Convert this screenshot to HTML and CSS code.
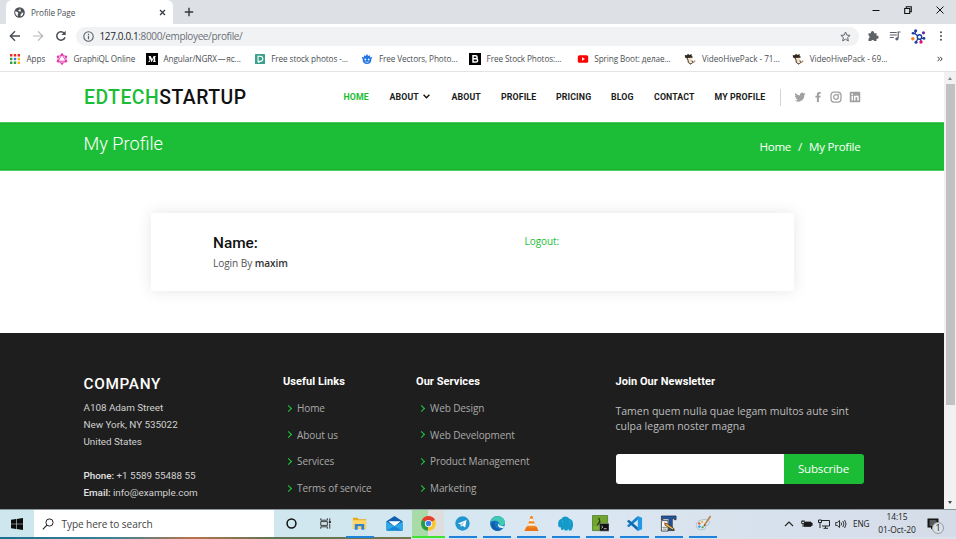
FILE: index.html
```html
<!DOCTYPE html>
<html lang="en">
<head>
<meta charset="utf-8">
<title>Profile Page</title>
<link rel="stylesheet" href="styles.css">
</head>
<body>
<div class="screen">
  <div class="tabstrip">
    <div class="tab">
      <svg class="globe" viewBox="0 0 10 10"><circle cx="5" cy="5" r="4.8" fill="#4b5056"/><path d="M1 4.2l2 .1 1 1.2-.6 1 .2 2.1C1.800 7.800 1 6.300 1 4.200zM5.400 1l-.4 1.400-1.300.6.8.9 1.700.2.5 1.300L8.600 5 8 7.200 6.300 8.700l-.5-1.700L7 5.800" fill="#fff"/></svg>
      <span class="tab-title">Profile Page</span>
      <svg class="tab-x" viewBox="0 0 7 7"><path d="M1 1l5 5M6 1L1 6" stroke="#33373b" stroke-width="1.200"/></svg>
    </div>
    <svg class="plus" viewBox="0 0 10 10"><path d="M5 .8v8.400M.8 5h8.400" stroke="#33373b" stroke-width="1.400"/></svg>
    <div class="win-controls">
      <svg viewBox="0 0 8 8"><path d="M.5 4.500h7" stroke="#111" stroke-width="1"/></svg>
      <svg viewBox="0 0 8 8"><path d="M.7 2.500h5v5h-5zM2.300 2.500V.8h5v5H5.700" fill="none" stroke="#111" stroke-width="1.100"/></svg>
      <svg viewBox="0 0 8 8"><path d="M.5.500l7 7M7.500.500l-7 7" stroke="#111" stroke-width="1"/></svg>
    </div>
  </div>
  <div class="toolbar">
    <svg class="nav-i" viewBox="0 0 12 12"><path d="M11 6H1.500M6 1.300L1.300 6 6 10.700" fill="none" stroke="#4a4e53" stroke-width="1.400"/></svg>
    <svg class="nav-i" viewBox="0 0 12 12"><path d="M1 6h9.500M6 1.300L10.700 6 6 10.700" fill="none" stroke="#b4b7ba" stroke-width="1.200"/></svg>
    <svg class="nav-i" viewBox="0 0 12 12"><path d="M10 7.200A4.200 4.200 0 1 1 9.200 3.200" fill="none" stroke="#4a4e53" stroke-width="1.500"/><path d="M10.700.8v4.300H6.400z" fill="#4a4e53"/></svg>
    <div class="omnibox">
      <svg class="info" viewBox="0 0 10 10"><circle cx="5" cy="5" r="4.300" fill="none" stroke="#5f6368"/><path d="M5 4.300v3.200M5 2.400v1.200" stroke="#5f6368" stroke-width="1.100"/></svg>
      <span class="url"><b>127.0.0.1</b>:8000/employee/profile/</span>
      <svg class="star" viewBox="0 0 10 10"><path d="M5 .9l1.200 2.800 3 .3-2.300 2 .7 3L5 7.500 2.400 9l.7-3L.8 4l3-.3z" fill="none" stroke="#5f6368" stroke-width=".9"/></svg>
    </div>
    <div class="ext">
      <svg viewBox="0 0 12 12"><path d="M1.500 3.200H4a1.600 1.600 0 1 1 3 0h2.500v2.500a1.600 1.600 0 1 1 0 3V11H7.200a1.600 1.600 0 0 0-3 0H1.500V8.600a1.600 1.600 0 0 0 0-3z" fill="#5f6368"/></svg>
      <svg viewBox="0 0 12 12"><path d="M.8 2.500h7M.8 5h7M.8 7.500h4M11.600 2H9.200v6.300" fill="none" stroke="#5f6368" stroke-width="1.200"/><circle cx="7.900" cy="8.800" r="1.600" fill="#5f6368"/></svg>
      <svg class="molecule" viewBox="0 0 15 15"><path d="M4.600 1.800L4 4.700 2 4.300M4 4.700l3 2.300M10.500 9.300l2.500.1M7 9.500l-2 3.700M9.500 10l.5 2.800" fill="none" stroke="#1d3f9c" stroke-width="1.300"/><circle cx="8.500" cy="8" r="2.200" fill="none" stroke="#1d3f9c" stroke-width="1.400"/><g fill="#1d3f9c"><circle cx="4.600" cy="1.800" r="1.600"/><circle cx="2" cy="4.300" r="1.300"/><circle cx="5" cy="13.200" r="1.500"/><circle cx="13" cy="9.400" r="1.400"/></g><circle cx="1.800" cy="9.800" r="1.700" fill="#f58220"/><circle cx="12.500" cy="3.800" r="1.600" fill="#662d91"/><circle cx="10" cy="13" r="1.700" fill="#e5127d"/></svg>
      <svg class="dots" viewBox="0 0 4 12"><g fill="#4a4e53"><circle cx="2" cy="2.200" r="1"/><circle cx="2" cy="6" r="1"/><circle cx="2" cy="9.800" r="1"/></g></svg>
    </div>
  </div>
  <div class="bookmarks">
    <div class="bm bm-apps"><svg viewBox="0 0 12 12"><g fill="#ea2b1f"><path d="M1 1h2.400v2.400H1zM4.800 1h2.400v2.400H4.800zM8.600 1H11v2.400H8.600z"/></g><path d="M1 4.800h2.400v2.400H1z" fill="#2f9e44"/><path d="M4.800 4.800h2.400v2.400H4.800z" fill="#2f7de1"/><path d="M8.600 4.800H11v2.400H8.600z" fill="#f6b50b"/><path d="M1 8.600h2.400V11H1zM4.800 8.600h2.400V11H4.800z" fill="#2f9e44"/><path d="M8.600 8.600H11V11H8.600z" fill="#f6b50b"/></svg><span>Apps</span></div>
    <div class="bm bm-gql"><svg viewBox="0 0 12 12"><path d="M6 1.500l4 2.300v4.400l-4 2.300-4-2.300V3.800zM6 1.500L2 8.200h8z" fill="none" stroke="#e535ab" stroke-width=".9"/><g fill="#e535ab"><circle cx="6" cy="1.400" r="1.200"/><circle cx="10" cy="3.700" r="1.200"/><circle cx="10" cy="8.300" r="1.200"/><circle cx="6" cy="10.600" r="1.200"/><circle cx="2" cy="8.300" r="1.200"/><circle cx="2" cy="3.700" r="1.200"/></g></svg><span>GraphiQL Online</span></div>
    <div class="bm bm-med"><svg viewBox="0 0 12 12"><path d="M0 0h12v12H0z" fill="#000"/><path d="M2.500 3h2.200L6.200 6.200 7.600 3h2.200v.6l-.6.500v4l.6.500v.5H7v-.5l.6-.5V4.900L5.800 9h-.4L3.600 5v3l.8 1H2.200l.8-1V4z" fill="#fff"/></svg><span>Angular/NGRX&#8202;—&#8202;яс...</span></div>
    <div class="bm bm-dep"><svg viewBox="0 0 12 12"><rect x="1" y="1" width="10" height="10" rx=".6" fill="#3aa18b"/><path d="M4 3.200h2.200a2.500 2.500 0 0 1 0 5.200H4zM4 9.300h1.500" fill="none" stroke="#fff" stroke-width="1.100"/></svg><span>Free stock photos -...</span></div>
    <div class="bm bm-vec"><svg viewBox="0 0 12 12"><path d="M.6 3.800l2 .6.700-2.200 1.600.8L6 .8l1.100 2.200 1.600-.8.700 2.200 2-.6-1 2.200c0 3.200-1.600 5-4.400 5S1.600 9.200 1.600 6z" fill="#2276e3"/><circle cx="4.300" cy="6.500" r=".9" fill="#fff"/><circle cx="7.700" cy="6.500" r=".9" fill="#fff"/><path d="M4.300 8.800q1.700 1 3.400 0" stroke="#fff" stroke-width=".7" fill="none"/></svg><span>Free Vectors, Photo...</span></div>
    <div class="bm bm-fsp"><svg viewBox="0 0 12 12"><path d="M0 0h12v12H0z" fill="#000"/><path d="M4 2.800h2.600a1.500 1.500 0 0 1 0 3H4zM4 5.800h3a1.600 1.600 0 0 1 0 3.300H4z" fill="none" stroke="#fff" stroke-width="1.500"/></svg><span>Free Stock Photos:...</span></div>
    <div class="bm bm-yt"><svg viewBox="0 0 12 12"><rect x=".8" y="2.200" width="10.400" height="7.600" rx="1.600" fill="#f00"/><path d="M5 4.200v3.600L8 6z" fill="#fff"/></svg><span>Spring Boot: делае...</span></div>
    <div class="bm bm-vh"><svg viewBox="0 0 12 12"><path d="M.8 2l2 .3L4 .8l1.300 1.300L7.500 1l.3 2.300 1.400.7-1.700 1-4.500.300L1 4.500z" fill="#33291f"/><path d="M3 5l4.500-.2.700 3-1.200 2.400L4.500 9z" fill="#f2e2c9"/><path d="M3 5l1 2 .3 2.500L7 11.200l1.500-1.500L8 7.500" fill="none" stroke="#3c3026"/><path d="M9 9.800l2.300-2.200" stroke="#b08a58" stroke-width="1.200"/></svg><span>VideoHivePack - 71...</span></div>
    <div class="bm bm-vh"><svg viewBox="0 0 12 12"><path d="M.8 2l2 .3L4 .8l1.300 1.300L7.500 1l.3 2.300 1.400.7-1.700 1-4.500.300L1 4.500z" fill="#33291f"/><path d="M3 5l4.500-.2.700 3-1.200 2.400L4.500 9z" fill="#f2e2c9"/><path d="M3 5l1 2 .3 2.500L7 11.200l1.500-1.500L8 7.500" fill="none" stroke="#3c3026"/><path d="M9 9.800l2.300-2.200" stroke="#b08a58" stroke-width="1.200"/></svg><span>VideoHivePack - 69...</span></div>
    <svg class="more" viewBox="0 0 6 6"><path d="M.6.800L2.600 3l-2 2.200M3.200.800L5.200 3l-2 2.200" fill="none" stroke="#3c4043" stroke-width="1"/></svg>
  </div>
  <div class="viewport">
    <div class="page">
      <header class="header">
        <div class="logo"><span>EDTECH</span>STARTUP</div>
        <nav class="nav">
          <a class="active w-home">HOME</a><a class="w-drop">ABOUT<svg viewBox="0 0 6 4"><path d="M.5.600L3 3.100 5.500.600" fill="none" stroke="#111" stroke-width="1.200"/></svg></a><a class="w-about">ABOUT</a><a class="w-prof">PROFILE</a><a class="w-price">PRICING</a><a class="w-blog">BLOG</a><a class="w-cont">CONTACT</a><a class="w-my">MY PROFILE</a>
        </nav>
        <div class="social">
          <svg viewBox="0 0 24 24"><path d="M23 5.500a9 9 0 0 1-2.600.7 4.500 4.500 0 0 0 2-2.500 9 9 0 0 1-2.900 1.100 4.500 4.500 0 0 0-7.700 4.100A12.800 12.800 0 0 1 2.500 4.200a4.500 4.500 0 0 0 1.400 6 4.500 4.500 0 0 1-2-.6 4.500 4.500 0 0 0 3.600 4.500 4.500 4.500 0 0 1-2 .1 4.500 4.500 0 0 0 4.200 3.100A9 9 0 0 1 1 19.100 12.800 12.800 0 0 0 20.700 7.800 9 9 0 0 0 23 5.500z"/></svg>
          <svg viewBox="0 0 24 24"><path d="M13.800 22v-9h3l.6-3.700h-3.600V7.100c0-1.200.5-1.800 1.800-1.800h1.900V2h-3c-3 0-4.700 1.800-4.700 4.600v2.700H6.700V13h3.100v9z"/></svg>
          <svg viewBox="0 0 24 24"><rect x="2" y="2" width="20" height="20" rx="6" fill="none" stroke="#a0a0a0" stroke-width="2.500"/><circle cx="12" cy="12" r="4.700" fill="none" stroke="#a0a0a0" stroke-width="2.500"/><circle cx="17.700" cy="6.300" r="1.500"/></svg>
          <svg viewBox="0 0 24 24"><path fill-rule="evenodd" d="M3 1.500h18a1.500 1.500 0 0 1 1.500 1.500v18a1.500 1.500 0 0 1-1.500 1.500H3A1.500 1.500 0 0 1 1.500 21V3A1.500 1.500 0 0 1 3 1.500zM5 9.500V19h3V9.500zM5 5v3h3V5zM10 9.500V19h3v-5c0-3 3.500-3 3.500 0v5h3v-6c0-4.500-5-4.700-6.500-2V9.500z"/></svg>
        </div>
      </header>
      <section class="banner"><h1>My Profile</h1><div class="crumbs"><span>Home</span><span>/</span><span>My Profile</span></div></section>
      <main class="main">
        <div class="card">
          <div class="who"><h2>Name:</h2><p>Login By <b>maxim</b></p></div>
          <a class="logout">Logout:</a>
        </div>
      </main>
      <footer class="footer">
        <div class="company"><h3>COMPANY</h3><p>A108 Adam Street</p><p>New York, NY 535022</p><p>United States</p><p class="phone"><b>Phone:</b> +1 5589 55488 55</p><p class="email"><b>Email:</b> info@example.com</p></div>
        <div class="links"><h4>Useful Links</h4><ul><li>Home</li><li>About us</li><li>Services</li><li>Terms of service</li></ul></div>
        <div class="links"><h4>Our Services</h4><ul><li>Web Design</li><li>Web Development</li><li>Product Management</li><li>Marketing</li></ul></div>
        <div class="news"><h4>Join Our Newsletter</h4><p>Tamen quem nulla quae legam multos aute sint<br>culpa legam noster magna</p><div class="sub"><span class="field"></span><span class="btn">Subscribe</span></div></div>
      </footer>
    </div>
    <div class="scrollbar"><i class="up"></i><div class="thumb"></div><i class="down"></i></div>
  </div>
  <div class="taskbar">
    <div class="start"><svg viewBox="0 0 12 12"><path d="M0 1.700L5 1v4.700H0zM5.600.9L12 0v5.700H5.600zM0 6.300h5V11l-5-.7zM5.600 6.300H12V12l-6.400-.9z" fill="#0b0b0b"/></svg></div>
    <div class="search"><svg viewBox="0 0 12 12"><circle cx="7.500" cy="4.500" r="3.600" fill="none" stroke="#222" stroke-width="1"/><path d="M4.900 7.100L.8 11.300" stroke="#222" stroke-width="1.100"/></svg><span>Type here to search</span></div>
    <div class="apps">
      <div class="app plain"><svg viewBox="0 0 18 18"><circle cx="9" cy="9" r="4.700" fill="none" stroke="#111" stroke-width="1.600"/></svg></div>
      <div class="app plain"><svg viewBox="0 0 18 18"><path d="M4 3.500v2h7v-2M4 14.500v-2h7v2M4 7h7v4H4zM13.500 3.500v3M13.500 9v5.500" fill="none" stroke="#333" stroke-width="1"/><path d="M12.500 6.500h2.200v2h-2.200z" fill="#222"/></svg></div>
      <div class="app"><svg viewBox="0 0 18 18"><path d="M2 3h5l1 1.500h8v10H2z" fill="#e9a91f"/><path d="M2 5.500h14v9H2z" fill="#ffd768"/><path d="M4 9.500h10v6h-3V12H7v3.500H4z" fill="#2d83cf"/></svg></div>
      <div class="app plain"><svg viewBox="0 0 18 18"><path d="M.5 6.500L9 1l8.500 5.500V16.500H.5z" fill="#0f5fae"/><path d="M2.500 6.500h13L9 12z" fill="#fff"/><path d="M.5 7L9 12l8.500-5v9.500H.5z" fill="#2aa8ea"/><path d="M.5 16.500L9 12l8.500 4.500z" fill="#1685d3"/></svg></div>
      <div class="app chrome"><svg viewBox="0 0 18 18"><circle cx="9" cy="9" r="7.800" fill="#fbc52d"/><path d="M9 9L2.200 5.100A7.800 7.800 0 0 1 15.800 5.100z" fill="#e23d2e"/><path d="M2.200 5.100L9 9l-.8 7.800A7.800 7.800 0 0 1 2.200 5.100z" fill="#269b49"/><circle cx="9" cy="9" r="3.800" fill="#fff"/><circle cx="9" cy="9" r="2.900" fill="#3f80e8"/></svg></div>
      <div class="app"><svg viewBox="0 0 18 18"><circle cx="9" cy="9" r="7.600" fill="#2196d0"/><path d="M4 9l9.300-3.700-1.500 8-3-2.200-1.500 1.600-.3-2.800z" fill="#fff"/><path d="M7 9.900l4.500-3-3 4.200" fill="#9ccde8"/></svg></div>
      <div class="app"><svg viewBox="0 0 18 18"><circle cx="9" cy="9" r="7.900" fill="#137ac6"/><path d="M1.500 7C3.500-.5 16-1 17 8c0 3.500-4.500 4.500-6.500 3 1.500-2.500-.5-5-3.500-5-2.500 0-4.500.5-5.500 1z" fill="#42c9b2"/><path d="M7 6.500c-3 3 0 9 6.500 8.700C9 18.500 2 16 2.500 10 3 7.500 5 6.500 7 6.500z" fill="#155ca8"/><path d="M10.300 8.300c-1 2.500 2 4.200 5.900 3.400l-.8 1.800c-4.500 1-7.400-2-5.100-5.200z" fill="#eaf4fa"/></svg></div>
      <div class="app"><svg viewBox="0 0 18 18"><path d="M3.500 12.500h11l2 4.500h-15z" fill="#ec7416"/><path d="M8 1h2l3.500 12q-4.500 2-9 0z" fill="#f0861c"/><path d="M7.100 4h3.800l.8 2.700H6.300zM5.700 9h6.600l.7 2.500H5z" fill="#f5f1ec"/></svg></div>
      <div class="app"><svg viewBox="0 0 18 18"><path d="M1.200 10C1.200 6 3 4.500 5 4c1-3 6-3.500 8 0 3 .5 4 3 4 6s-1 5-2 6.500h-2.500L12 14.500l-1 2H8L7.500 14.500 6 16H4.500L4 13c-1 .5-2.800 0-2.800-3z" fill="#1499c9"/><path d="M6 5q-1 3 1 5M13 5q2 3 0 5" fill="none" stroke="#23b8df" stroke-width=".7"/></svg></div>
      <div class="app"><svg viewBox="0 0 18 18"><path d="M.5.500h16v16H.5z" fill="#6fa52f" stroke="#446b19" stroke-width=".7"/><path d="M1.500 12h7v3.500h-7z" fill="#7ab536"/><path d="M7 3q2 3 1 8M8 7L5.500 11" stroke="#27420d" stroke-width="1.200" fill="none"/><path d="M8 9h10v8H8z" fill="#111" stroke="#999" stroke-width=".6"/><path d="M10 11.500l1.500 1.300-1.500 1.300M12.500 14.500h3" fill="none" stroke="#ddd" stroke-width=".9"/></svg></div>
      <div class="app"><svg viewBox="0 0 18 18"><path d="M12.500 1L17 3v12l-4.500 2z" fill="#2399e5"/><path d="M12.500 1v4L3 13l-2-1.600z" fill="#1681ce"/><path d="M12.500 17v-4L3 5 1 6.600z" fill="#0b6bb3"/></svg></div>
      <div class="app"><svg viewBox="0 0 18 18"><path d="M1.500 1h15.500v4h-1.500l-.5-1h-2v11h2v1.500H8V15h1.500V4h-6L3 5H1.500z" fill="#1f56a8" stroke="#222" stroke-width=".7"/><path d="M1.500 6h7v11h-7z" fill="#fff" stroke="#222" stroke-width=".8"/><path d="M2.500 13h5M3 15h4" stroke="#555" stroke-width=".8"/><path d="M6.500 8.500l8 5.500-1 2-8.500-5.500z" fill="#f3b53b" stroke="#352510" stroke-width=".7"/><path d="M4 8l3 .5-1.500 2z" fill="#b24b28"/></svg></div>
      <div class="app"><svg viewBox="0 0 18 18"><path d="M8 5c5-1 8 1 7 4s-4 1-4 3 1 3-3 3.500C3 16 .8 13 1.500 9.500 2 7 4.500 5.600 8 5z" fill="#dcebf3" stroke="#84a6b9" stroke-width=".6"/><g><circle cx="4.500" cy="9" r="1.300" fill="#e55639"/><circle cx="7.500" cy="7.200" r="1.200" fill="#f4b32a"/><circle cx="4.600" cy="12.300" r="1.300" fill="#2c8edb"/><circle cx="8" cy="13" r="1.200" fill="#54a942"/></g><path d="M16.500 1L9.500 11.500" stroke="#bb8042" stroke-width="1.700"/><path d="M10 9.500l1.300 1L9 13z" fill="#8c4d23"/></svg></div>
    </div>
    <div class="tray">
      <svg class="t-up" viewBox="0 0 10 10"><path d="M1 7l4-4 4 4" fill="none" stroke="#222" stroke-width="1.100"/></svg>
      <svg class="t-bat" viewBox="0 0 12 10"><path d="M4 3h6v1h1.200v2.500H10v1H3V5z" fill="#1b1b1b" stroke="#1b1b1b" stroke-width=".7"/><path d="M.5 2.500h3v2h-3zM2 4.500V8M1.200 1v1.500M3 1v1.500" fill="none" stroke="#1b1b1b" stroke-width=".8"/></svg>
      <svg class="t-net" viewBox="0 0 12 10"><path d="M3.500 1.500h8v5.500H4M7.500 7v2M5.500 9.300h4.500M.5 1h3v2.500h-3zM2 3.500V9" fill="none" stroke="#222" stroke-width="1"/></svg>
      <svg class="t-vol" viewBox="0 0 12 10"><path d="M.7 3.500h1.600L4.500 1.500v7L2.300 6.500H.7zM6 3.500q1.200 1.500 0 3M7.800 2q2.200 3 0 6M9.600 1q3 4 0 8" fill="none" stroke="#222" stroke-width=".9"/></svg>
      <span class="lang">ENG</span>
      <div class="clock"><span>14:15</span><span>01-Oct-20</span></div>
      <div class="note"><svg viewBox="0 0 12 12"><path d="M.5.500h11v9H6l-2 2v-2H.5z" fill="#151515"/><path d="M2.500 3h7M2.500 5h7M2.500 7h4" stroke="#d5dce6" stroke-width=".7"/></svg><span class="badge">1</span></div>
    </div>
  </div>
  <div class="wallpaper"></div>
</div>
</body>
</html>
```
FILE: styles.css
```css
* { box-sizing: border-box; margin: 0; padding: 0; }
body { width: 956px; height: 539px; overflow: hidden; background: #fff; font-family: "Open Sans", "Noto Sans", sans-serif; }
svg { display: block; flex: none; }
.screen { display: flex; flex-direction: column; width: 956px; height: 539px; }

.tabstrip { display: flex; height: 24px; background: #dde1e6; padding-left: 6px; align-items: center; }
.tab { display: flex; align-items: center; width: 167px; height: 24px; padding-left: 8px; background: #fff; border-radius: 6px 6px 0 0; }
.globe { width: 11px; height: 11px; }
.tab-title { width: 128px; margin-left: 6px; font-size: 8.200px; letter-spacing: -.1px; color: #4b4f54; }
.tab-x { width: 7px; height: 7px; }
.plus { width: 10px; height: 10px; margin-left: 11px; }
.win-controls { display: flex; gap: 24px; margin: -4px 12px 0 auto; }
.win-controls svg { width: 8px; height: 8px; }

.toolbar { display: flex; height: 24px; align-items: center; padding-left: 9px; }
.nav-i { width: 12px; height: 12px; margin-right: 11px; }
.omnibox { display: flex; align-items: center; width: 783px; height: 19px; margin-left: -2px; padding: 0 8px 0 7px; border-radius: 10px; background: #f0f2f4; }
.info { width: 11px; height: 11px; }
.url { flex: 1; margin-left: 5.500px; font-size: 10px; letter-spacing: -.37px; color: #6b6f74; }
.url b { font-weight: 400; color: #24272a; }
.star { width: 11px; height: 11px; }
.ext { display: flex; align-items: center; margin-left: 8px; }
.ext svg { width: 12px; height: 12px; margin-right: 10px; }
.ext .molecule { width: 15px; height: 15px; margin-right: 13px; }
.ext .dots { width: 4px; margin: 0; }

.bookmarks { display: flex; align-items: center; height: 24px; padding: 0 0 2px 9px; border-bottom: 1px solid #e3e4e5; }
.bm { display: flex; gap: 5.500px; align-items: center; width: 107.700px; white-space: nowrap; font-size: 8.200px; letter-spacing: -.1px; color: #4b4f54; }
.bm svg { width: 12px; height: 12px; }
.bm-apps { width: 47px; }
.bm-gql { width: 90px; }
.bm-gql span { letter-spacing: -.15px; }
.bm-vh span { letter-spacing: -.04px; }
.more { width: 6px; height: 6px; margin-left: 37px; }

.viewport { display: flex; height: 437px; }
.page { width: 944px; height: 437px; overflow: hidden; }
.header { display: flex; align-items: center; height: 50px; padding-left: 84px; }
.logo { width: 259.500px; font: 500 19.400px Roboto, sans-serif; letter-spacing: .48px; color: #111; }
.logo span { color: #1bbd36; }
.nav { display: flex; margin-top: -1px; font: 700 8.800px Roboto, sans-serif; letter-spacing: .12px; color: #1c1c1c; }
.nav a { display: flex; align-items: center; white-space: nowrap; }
.nav svg { width: 7px; height: 5px; margin-left: 4.500px; }
.nav .active { color: #1bbd36; }
.w-home { width: 46px; }
.w-drop { width: 62px; }
.w-about { width: 49.500px; }
.w-prof { width: 55px; }
.w-price { width: 55px; }
.w-blog { width: 43px; }
.w-cont { width: 60.500px; }
.w-my { width: 65px; }
.social { display: flex; align-items: center; gap: 6.400px; height: 17px; padding-left: 13px; border-left: 1px solid #d4d4d4; }
.social svg { width: 12px; height: 12px; fill: #a0a0a0; }
.banner { display: flex; justify-content: space-between; height: 49px; padding: 0 83.500px; background: #1dbe37; border-top: 1px solid #4fcd63; border-bottom: 1px solid #4fcd63; color: #fff; box-shadow: inset 0 1px #19b033, inset 0 -1px #19b033; }
.banner h1 { margin-top: 9px; font: 300 18.200px/24px Roboto, sans-serif; }
.crumbs { display: flex; gap: 7px; margin-top: 15px; font-size: 11.600px; font-weight: 500; line-height: 17px; letter-spacing: -.28px; }
.main { height: 162px; padding: 42px 0 0 151px; background: #fff; }
.card { display: flex; width: 643px; height: 78px; padding: 20px 0 0 62px; box-shadow: 0 0 14px rgba(0,0,0,.1); }
.who { width: 311.500px; }
.who h2 { font: 500 15.400px/20px Roboto, sans-serif; color: #111; }
.who p { margin-top: 1px; font-size: 10.100px; line-height: 18px; letter-spacing: -.07px; color: #555; }
.who b { font-weight: 600; color: #333; }
.logout { font-size: 10px; line-height: 17px; letter-spacing: -.05px; color: #1bbd36; }

.footer { display: flex; height: 176px; padding: 40px 0 0 83.500px; background: #1e1e1e; color: #fff; }
.company { width: 199.500px; font-family: Roboto, sans-serif; }
.company h3 { height: 27px; font-size: 15.300px; font-weight: 500; line-height: 23px; letter-spacing: .7px; }
.company p { font-size: 9.900px; line-height: 16.900px; letter-spacing: -.03px; color: #d0d0d0; }
.company b { font-weight: 500; color: #e2e2e2; }
.company .phone { margin-top: 17px; }
.links { width: 133px; }
.links + .links { width: 199.500px; }
.footer h4 { font: 700 11px/18px Roboto, sans-serif; letter-spacing: .06px; }
.links ul { list-style: none; margin-top: 8px; }
.links li { display: flex; align-items: center; height: 26.600px; padding: 0 0 8px 3px; font-size: 10px; letter-spacing: -.1px; color: #a9a9a9; }
.links li::before { content: ""; width: 4px; height: 4px; margin-right: 6px; border: solid #1bd03a; border-width: 1.200px 1.200px 0 0; transform: rotate(45deg); }
.news { width: 248px; }
.news p { margin-top: 12.500px; font-size: 10.500px; line-height: 15.500px; white-space: nowrap; color: #bdbdbd; }
.sub { display: flex; height: 30px; margin-top: 19px; border-radius: 3px; overflow: hidden; }
.field { width: 168px; background: #fff; }
.btn { flex: 1; background: #1bbd36; font-size: 11.500px; font-weight: 500; line-height: 29px; letter-spacing: -.15px; text-align: center; }

.scrollbar { display: flex; flex-direction: column; align-items: center; width: 12px; height: 437px; background: #f1f1f1; }
.scrollbar i { border: solid transparent; border-width: 0 2.500px; }
.scrollbar .up { margin: 5px 0 4px; border-bottom: 3px solid #888; }
.thumb { width: 9px; height: 321px; background: #c1c1c1; }
.scrollbar .down { margin-top: auto; margin-bottom: 5px; border-top: 3px solid #444; }

.taskbar { display: flex; height: 28px; border-top: 1px solid #8b979e; background: linear-gradient(90deg, #cee6ee, #d0e7f0 35%, #dbe7f2 60%, #d4dce8); }
.start { width: 34px; padding: 8px 11px; }
.start svg { width: 12px; height: 12px; }
.search { display: flex; align-items: center; width: 240px; padding-left: 8px; background: #fff; }
.search svg { width: 12px; height: 12px; margin-right: 7.500px; }
.search span { font-size: 10.100px; letter-spacing: -.1px; color: #444; }
.apps { display: flex; }
.app { position: relative; width: 34.350px; height: 28px; padding-top: 5px; }
.app svg { width: 17px; height: 17px; margin: 0 auto; }
.app::after { content: ""; position: absolute; left: 3px; right: 3px; top: 26px; height: 2px; background: #2082d8; }
.app.plain::after { display: none; }
.chrome { background: linear-gradient(90deg, transparent 1px, #a8dba7 1px, #a8dba7 17px, #dedede 17px, #dedede 33px, transparent 33px); }
.chrome::after { left: 1px; right: 1px; background: #41e333; }
.tray { display: flex; align-items: center; margin-left: auto; }
.tray svg { width: 12px; height: 10px; }
.tray .t-up { width: 10px; margin-right: 7px; }
.t-bat, .t-net { margin-right: 5px; }
.t-vol { margin-right: 6px; }
.lang { width: 25px; font-size: 8.200px; letter-spacing: -.1px; color: #222; }
.clock { display: flex; flex-direction: column; align-items: center; width: 38px; font-size: 8.400px; line-height: 12.500px; letter-spacing: -.08px; white-space: nowrap; color: #222; }
.note { position: relative; width: 29px; margin-left: 11px; }
.note svg { height: 12px; }
.note .badge { position: absolute; left: 5px; top: 4px; width: 12px; height: 12px; border: 1px solid #999; border-radius: 50%; background: #dce2e9; font-size: 9px; line-height: 10px; text-align: center; color: #222; }
.wallpaper { height: 2px; background: linear-gradient(90deg, #1b6f8f, #3d8394 12%, #b5744d 20%, #5b7554 29%, #74774e 43%, #d9e3ee 43%, #d9e3ee); }
```
